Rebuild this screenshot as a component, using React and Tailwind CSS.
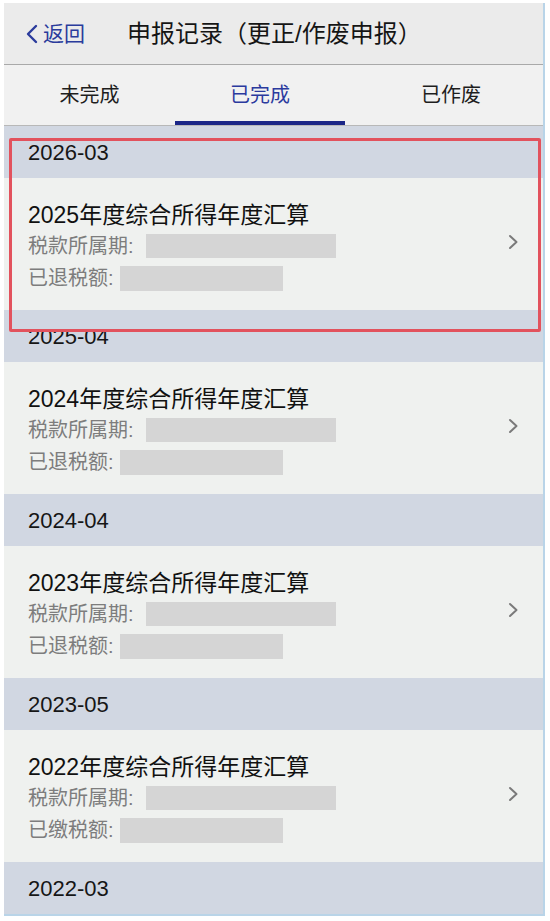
import React from 'react';

const records = [
  { month: '2026-03', year: '2025', paid: '已退税额' },
  { month: '2025-04', year: '2024', paid: '已退税额' },
  { month: '2024-04', year: '2023', paid: '已退税额' },
  { month: '2023-05', year: '2022', paid: '已缴税额' },
];

const font = { fontFamily: '"Liberation Sans", "Noto Sans CJK SC", sans-serif' };

function Chevron() {
  return (
    <svg width="11" height="16" viewBox="0 0 11 16" className="shrink-0">
      <polyline points="2,2 8.5,8 2,14" fill="none" stroke="#7a7a7a" strokeWidth="2" strokeLinecap="round" strokeLinejoin="round" />
    </svg>
  );
}

function MonthHeader({ label }) {
  return (
    <div className="h-[52px] flex items-center pl-[24px] bg-[#d1d7e2] text-[22px] text-[#161616]">
      {label}
    </div>
  );
}

function RecordRow({ year, paid }) {
  return (
    <div className="h-[132px] bg-[#eff1ef] flex items-start pl-[24px] pr-[24px]">
      <div className="flex-1 pt-[22px]">
        <div className="h-[30px] flex items-center text-[23px] text-[#111]">{year}年度综合所得年度汇算</div>
        <div className="h-[32px] flex items-center text-[20px] text-[#7d7d7d]">
          <span>税款所属期:</span>
          <div className="ml-[12px] w-[190px] h-[24px] bg-[#d5d5d5]" />
        </div>
        <div className="h-[32px] flex items-center text-[20px] text-[#7d7d7d]">
          <span>{paid}:</span>
          <div className="ml-[6px] w-[163px] h-[25px] bg-[#d5d5d5]" />
        </div>
      </div>
      <div className="pt-[56px]">
        <Chevron />
      </div>
    </div>
  );
}

export default function App() {
  return (
    <div className="w-[550px] h-[921px] bg-white relative overflow-hidden" style={font}>
      <div className="ml-[4px] mt-[3px] w-[541px] border-r-2 border-b-2 border-[#b9d4e8]">
        {/* Nav bar */}
        <div className="h-[62px] bg-[#ebebeb] border-b border-[#a9a9a9] flex items-center pl-[21px]">
          <svg width="13" height="20" viewBox="0 0 13 20" className="shrink-0">
            <polyline points="11,2 3,10 11,18" fill="none" stroke="#2a3b9c" strokeWidth="2.4" strokeLinecap="round" strokeLinejoin="round" />
          </svg>
          <span className="ml-[5px] text-[21px] text-[#2a3b9c]">返回</span>
          <span className="ml-[42px] text-[24px] text-[#151515]">申报记录（更正/作废申报）</span>
        </div>

        {/* Tabs */}
        <div className="h-[61px] bg-[#f1f1f1] border-b border-[#b8b8b8] flex">
          <div className="w-[171px] flex items-center justify-center text-[20px] text-[#1e1e1e]">未完成</div>
          <div className="w-[170px] flex flex-col">
            <div className="flex-1 flex items-center justify-center pt-[4px] text-[20px] text-[#2b3a9e]">已完成</div>
            <div className="h-[4px] bg-[#1b2687]" />
          </div>
          <div className="flex-1 flex items-center justify-center pl-[14px] text-[20px] text-[#1e1e1e]">已作废</div>
        </div>

        {records.map((r) => (
          <div key={r.month}>
            <MonthHeader label={r.month} />
            <RecordRow year={r.year} paid={r.paid} />
          </div>
        ))}
        <MonthHeader label="2022-03" />
      </div>

      {/* Annotation highlight */}
      <div className="absolute left-[9px] top-[138px] w-[532px] h-[194px] border-[3px] border-[#e2525d] rounded-[2px]" />
    </div>
  );
}
